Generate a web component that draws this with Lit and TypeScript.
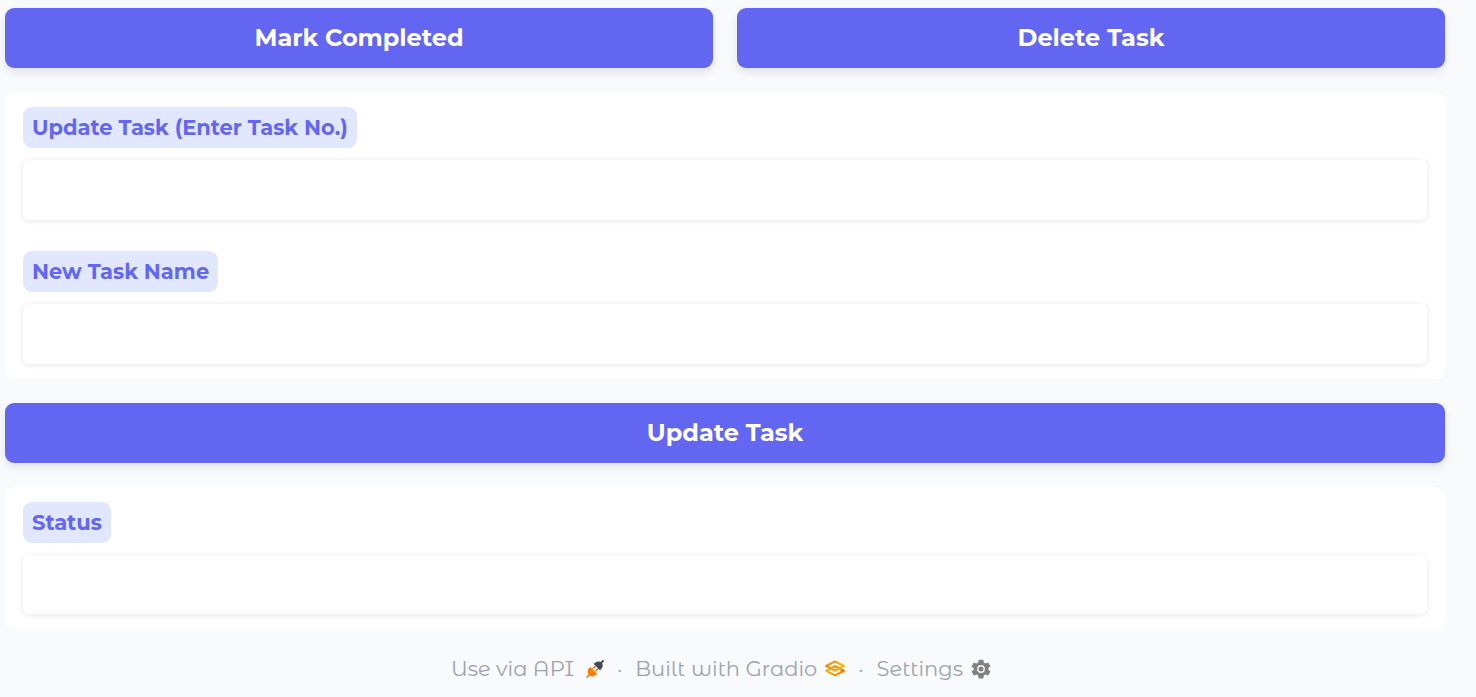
import { LitElement, html, css } from "lit";
import { customElement } from "lit/decorators.js";

@customElement("app-root")
export class AppRoot extends LitElement {
  static styles = css`
    :host {
      display: block;
      box-sizing: border-box;
      min-height: 100vh;
      padding: 8px 31px 12px 5px;
      background: #f9fafc;
      font-family: Montserrat, Inter, sans-serif;
    }
    * { box-sizing: border-box; }
    main { display: flex; flex-direction: column; gap: 24px; }
    .row { display: grid; grid-template-columns: 1fr 1fr; gap: 24px; }
    .button {
      width: 100%;
      height: 60px;
      padding: 0;
      border: 0;
      border-radius: 9px;
      background: #6366f1;
      color: #fff;
      font: inherit;
      font-size: 24px;
      font-weight: 700;
      line-height: 36px;
      box-shadow: 0 4px 9px rgba(0, 0, 0, 0.1);
      cursor: pointer;
    }
    .card {
      display: flex;
      flex-direction: column;
      gap: 1px;
      border-radius: 9px;
      background: #fff;
    }
    .field {
      display: flex;
      flex-direction: column;
      align-items: flex-start;
      gap: 12px;
      padding: 15px 18px;
    }
    .label {
      padding: 4px 9px;
      border-radius: 9px;
      background: #e0e7ff;
      color: #6366f1;
      font-size: 21px;
      font-weight: 700;
      line-height: 33px;
    }
    .box {
      display: block;
      width: 100%;
      height: 60px;
      padding: 15px;
      border: 0;
      border-radius: 6px;
      outline: none;
      background: #fff;
      color: #1f2937;
      font: inherit;
      font-size: 21px;
      line-height: 30px;
      resize: none;
      box-shadow: 0 1px 6px rgba(0, 0, 0, 0.1);
    }
    textarea.box { height: 59px; }
    footer {
      display: flex;
      justify-content: center;
      align-items: center;
      gap: 13px;
      margin-top: 24px;
      padding-right: 8px;
      color: #9ca3af;
      font-family: "Montserrat Alternates", Montserrat, Inter, sans-serif;
      font-size: 21px;
      font-weight: 400;
      line-height: 32px;
    }
    .link {
      display: flex;
      align-items: center;
      gap: 8px;
      color: inherit;
      text-decoration: none;
    }
    .link.api { gap: 12px; }
    .icon { display: block; width: 20px; height: 20px; }
    .api .icon { width: 18px; }
  `;

  render() {
    return html`
      <main>
        <div class="row">
          <button class="button" type="button">Mark Completed</button>
          <button class="button" type="button">Delete Task</button>
        </div>
        <section class="card">
          <div class="field">
            <label class="label" for="task-number">Update Task (Enter Task No.)</label>
            <input class="box" id="task-number" type="text" />
          </div>
          <div class="field">
            <label class="label" for="task-name">New Task Name</label>
            <input class="box" id="task-name" type="text" />
          </div>
        </section>
        <button class="button" type="button">Update Task</button>
        <section class="card">
          <div class="field">
            <label class="label" for="status">Status</label>
            <textarea class="box" id="status" rows="1" readonly></textarea>
          </div>
        </section>
      </main>
      <footer>
        <a class="link api" href="#api">Use via API
          <svg class="icon" viewBox="1 1 18 18" aria-hidden="true">
            <path d="M2 18.2 4.3 15.7M8.1 9.4l2.2-2.2M10.7 12l2.2-2.2" stroke="#ff7c00" stroke-width="1.6" stroke-linecap="round"/>
            <path d="M5.2 8 12 14.8C10.6 17.2 6.6 18.6 4 16 1.4 13.4 2.8 9.4 5.2 8Z" fill="#ff7c00"/>
            <path d="M8.8 5.1 15 11.3C17.6 9.5 18.8 5.9 16.5 3.6 14.2 1.3 10.6 2.5 8.8 5.1Z" fill="#3f4758"/>
            <path d="M16 4 18 2" stroke="#3f4758" stroke-width="1.8" stroke-linecap="round"/>
          </svg>
        </a>
        <span>·</span>
        <a class="link" href="#gradio">Built with Gradio
          <svg class="icon" viewBox="0 0 20 20" aria-hidden="true">
            <defs>
              <linearGradient id="amber" x1="0" y1="0" x2="1" y2="0">
                <stop stop-color="#f98a00"/><stop offset="1" stop-color="#ffb800"/>
              </linearGradient>
              <linearGradient id="orange" x1="0" y1="0" x2="1" y2="0">
                <stop stop-color="#ffb800"/><stop offset="1" stop-color="#f97700"/>
              </linearGradient>
            </defs>
            <path d="M10 7.2 18.8 11.8 10 16.4 1.2 11.8Z" fill="none" stroke="url(#orange)" stroke-width="2.2" stroke-linejoin="round"/>
            <path d="M10 2.4 18.8 7 10 11.6 1.2 7Z" fill="none" stroke="url(#amber)" stroke-width="2.2" stroke-linejoin="round"/>
          </svg>
        </a>
        <span>·</span>
        <a class="link" href="#settings">Settings
          <svg class="icon" viewBox="0 0 20 20" aria-hidden="true">
            <path d="M7.7.7h4.6l.5 2.8 1.7 1 2.7-1 2.3 4-2.2 1.8v1.5l2.2 1.8-2.3 4-2.7-1-1.7 1-.5 2.9H7.7l-.5-2.9-1.7-1-2.7 1-2.3-4 2.2-1.8V9.3L.5 7.5l2.3-4 2.7 1 1.7-1Z" fill="#808080"/>
            <circle cx="10" cy="10" r="3.2" fill="none" stroke="#f9fafc" stroke-width="1.4"/>
          </svg>
        </a>
      </footer>
    `;
  }
}
